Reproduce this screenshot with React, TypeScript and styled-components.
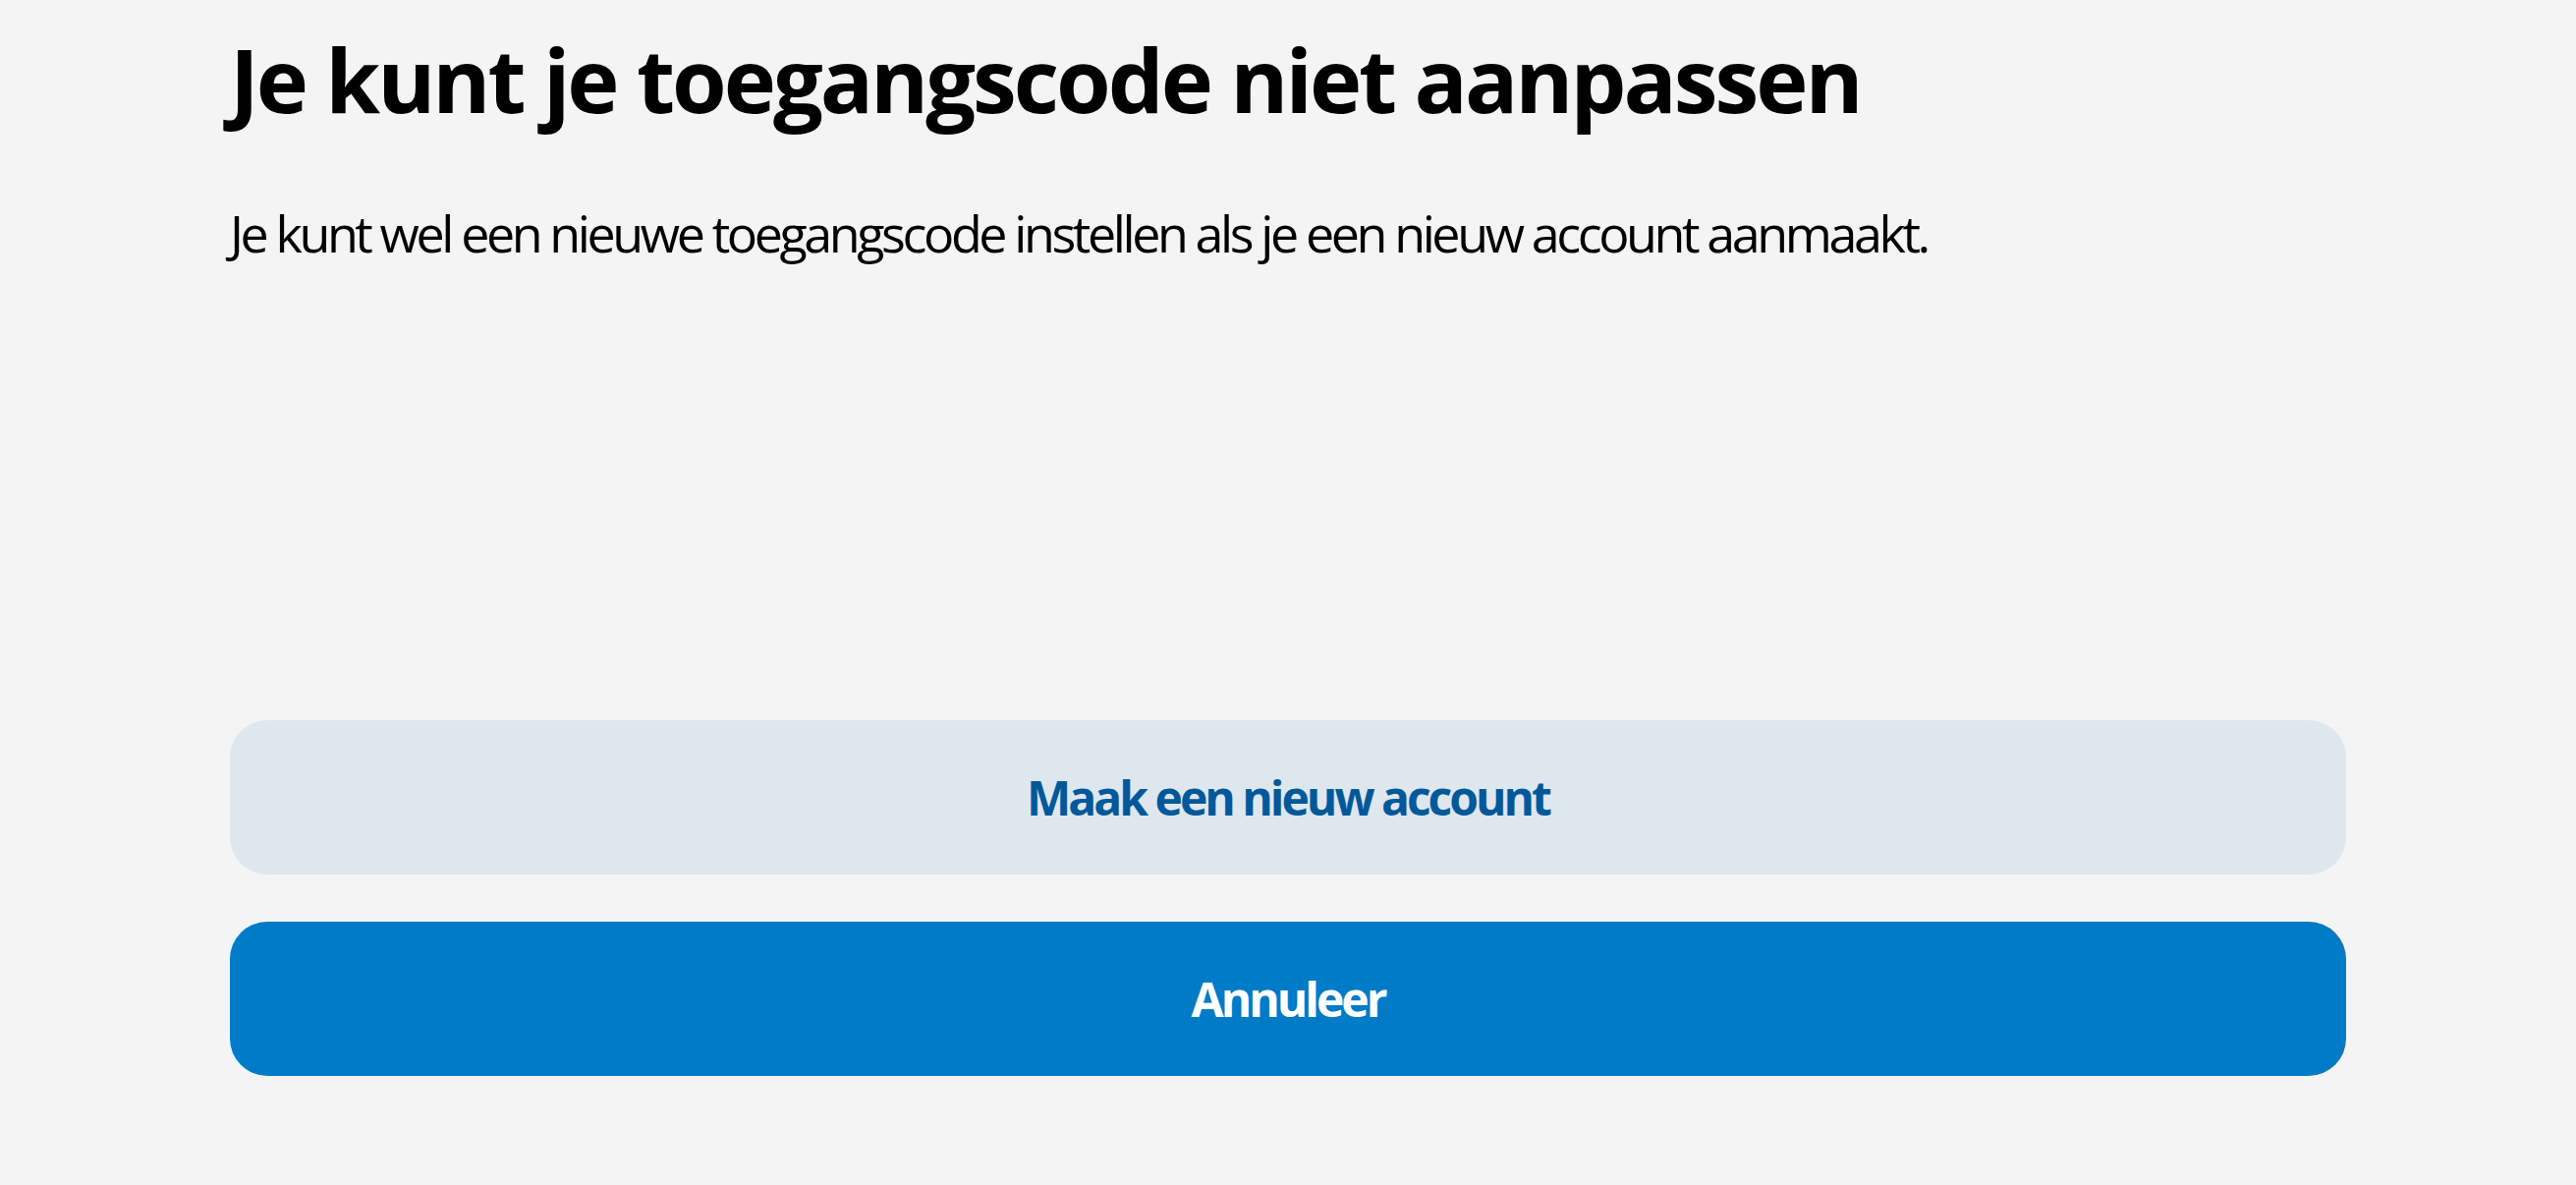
import styled, { createGlobalStyle } from 'styled-components';

const GlobalStyle = createGlobalStyle`
  html, body {
    margin: 0;
    padding: 0;
    background: #f4f4f4;
  }
`;

const Page = styled.main`
  min-height: 100vh;
  box-sizing: border-box;
  padding: 0 234px;
  display: flex;
  flex-direction: column;
  font-family: 'Open Sans', 'Liberation Sans', sans-serif;
  color: #000;
`;

const Title = styled.h1`
  margin: 26px 0 0;
  font-size: 90px;
  line-height: 108px;
  font-weight: 700;
  letter-spacing: -3px;
`;

const Lead = styled.p`
  margin: 67px 0 0;
  font-size: 52px;
  line-height: 72px;
  font-weight: 400;
  letter-spacing: -3.4px;
`;

const Actions = styled.div`
  margin-top: 460px;
  display: flex;
  flex-direction: column;
  gap: 48px;
`;

const Button = styled.button<{ $primary?: boolean }>`
  height: 157px;
  border: 0;
  border-radius: 38px;
  font-family: inherit;
  font-size: 48px;
  font-weight: 700;
  letter-spacing: -3px;
  cursor: pointer;
  background: ${(p) => (p.$primary ? '#007bc7' : '#dee6ee')};
  color: ${(p) => (p.$primary ? '#ffffff' : '#01599a')};
`;

export default function App() {
  return (
    <>
      <GlobalStyle />
      <Page>
        <Title>Je kunt je toegangscode niet aanpassen</Title>
        <Lead>Je kunt wel een nieuwe toegangscode instellen als je een nieuw account aanmaakt.</Lead>
        <Actions>
          <Button type="button">Maak een nieuw account</Button>
          <Button type="button" $primary>
            Annuleer
          </Button>
        </Actions>
      </Page>
    </>
  );
}
